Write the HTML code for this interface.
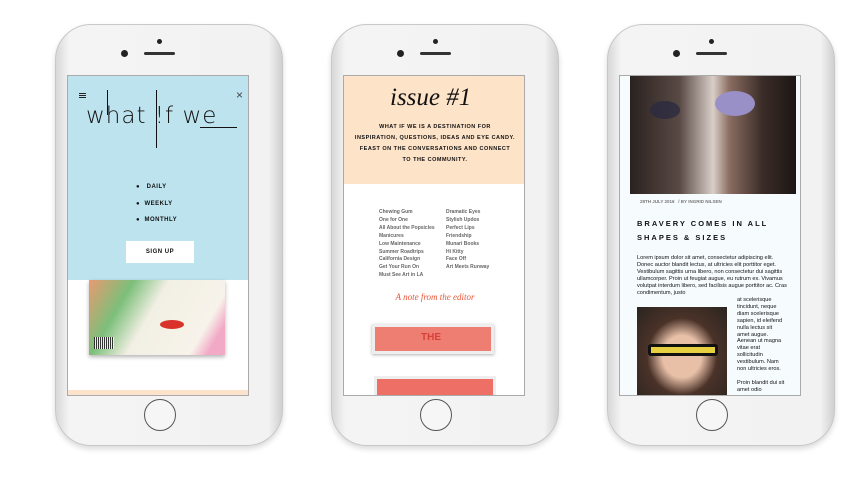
<!DOCTYPE html>
<html><head><style>
*{margin:0;padding:0;box-sizing:border-box}
body{width:863px;height:488px;background:#fff;position:relative;overflow:hidden;font-family:"Liberation Sans",sans-serif}
.ph{position:absolute;top:24px;width:228px;height:422px;border-radius:36px;background:linear-gradient(90deg,#d8d8d8,#f4f4f4 6%,#f2f2f2 94%,#d0d0d0);border:1px solid #c8c8c8;box-shadow:0 3px 6px rgba(0,0,0,.15)}
.ph .dot{position:absolute;top:14px;left:101px;width:5px;height:5px;border-radius:50%;background:#222}
.ph .cam{position:absolute;top:25px;left:65px;width:7px;height:7px;border-radius:50%;background:#222}
.ph .spk{position:absolute;top:27px;left:88px;width:31px;height:3px;border-radius:2px;background:#333}
.ph .home{position:absolute;top:374px;left:88px;width:32px;height:32px;border-radius:50%;border:1.5px solid #555;background:#f6f6f6}
.sc{position:absolute;top:50px;left:11px;width:182px;height:321px;overflow:hidden;background:#fff;border:1px solid #aaa}
.b{font-weight:bold;font-size:6px;letter-spacing:.5px;color:#111}
</style></head><body>

<div class="ph" style="left:55px">
<div class="dot"></div><div class="cam"></div><div class="spk"></div><div class="home"></div>
<div class="sc">
<div style="position:absolute;left:0;top:0;width:182px;height:204px;background:#bde3ee"></div>
<div style="position:absolute;left:11px;top:17px;width:7px;height:1px;background:#222;box-shadow:0 2px 0 #222,0 4px 0 #222"></div>
<div style="position:absolute;left:168px;top:12px;font-size:12px;color:#444">×</div>
<div style="position:absolute;left:18px;top:27px;font-size:23px;color:#111;font-family:'DejaVu Sans',sans-serif;font-weight:200;letter-spacing:1px">what !f we</div>
<div style="position:absolute;left:132px;top:51px;width:37px;height:1px;background:#111"></div>
<div style="position:absolute;left:39px;top:14px;width:1px;height:25px;background:#111"></div>
<div style="position:absolute;left:88px;top:14px;width:1px;height:58px;background:#111"></div>
<div class="b" style="position:absolute;left:68px;top:108px">● &nbsp;&nbsp;DAILY</div>
<div class="b" style="position:absolute;left:68px;top:125px">● &nbsp;WEEKLY</div>
<div class="b" style="position:absolute;left:68px;top:141px">● &nbsp;MONTHLY</div>
<div class="b" style="position:absolute;left:58px;top:165px;width:68px;height:22px;background:#fff;text-align:center;line-height:22px">SIGN UP</div>
<div style="position:absolute;left:21px;top:204px;width:136px;height:75px;background:linear-gradient(120deg,#e89a70,#7cbf7a 25%,#f2efe4 45%,#f7f3ea 80%,#f2a9c6 90%);box-shadow:0 2px 4px rgba(0,0,0,.3)"></div>
<div style="position:absolute;left:92px;top:244px;width:24px;height:9px;border-radius:50%;background:#d8322a"></div>
<div style="position:absolute;left:26px;top:261px;width:20px;height:12px;background:repeating-linear-gradient(90deg,#333 0 1px,#eee 1px 2px)"></div>
<div style="position:absolute;left:0;top:314px;width:182px;height:7px;background:#fde3cc"></div>
</div></div>

<div class="ph" style="left:331px">
<div class="dot"></div><div class="cam"></div><div class="spk"></div><div class="home"></div>
<div class="sc">
<div style="position:absolute;left:0;top:0;width:182px;height:108px;background:#fde3c8"></div>
<div style="position:absolute;left:46px;top:8px;font-size:25px;font-family:'Liberation Serif',serif;font-style:italic;color:#111">issue #1</div>
<div class="b" style="position:absolute;left:0;top:46px;width:182px;text-align:center;line-height:11px;font-size:5.5px">WHAT IF WE IS A DESTINATION FOR<br>INSPIRATION, QUESTIONS, IDEAS AND EYE CANDY.<br>FEAST ON THE CONVERSATIONS AND CONNECT<br>TO THE COMMUNITY.</div>
<div style="position:absolute;left:35px;top:133px;font-size:5px;font-weight:bold;color:#666;line-height:7.9px">Chewing Gum<br>One for One<br>All About the Popsicles<br>Manicures<br>Low Maintenance<br>Summer Roadtrips<br>California Design<br>Get Your Run On<br>Must See Art in LA</div>
<div style="position:absolute;left:102px;top:133px;font-size:5px;font-weight:bold;color:#666;line-height:7.9px">Dramatic Eyes<br>Stylish Updos<br>Perfect Lips<br>Friendship<br>Munari Books<br>Hi Kitty<br>Face Off<br>Art Meets Runway</div>
<div style="position:absolute;left:0;top:216px;width:182px;text-align:center;font-size:9px;font-style:italic;color:#e8573a;font-family:'Liberation Serif',serif">A note from the editor</div>
<div style="position:absolute;left:28px;top:248px;width:122px;height:30px;background:#ee7d72;border:3px solid #eee;box-shadow:0 1px 3px rgba(0,0,0,.3)"></div>
<div style="position:absolute;left:77px;top:256px;font-size:10px;font-weight:bold;color:#d8403a">THE</div>
<div style="position:absolute;left:30px;top:300px;width:122px;height:25px;background:#ee6f66;border:3px solid #eee"></div>
</div></div>

<div class="ph" style="left:607px">
<div class="dot"></div><div class="cam"></div><div class="spk"></div><div class="home"></div>
<div class="sc" style="background:#f6fbfe">
<div style="position:absolute;left:10px;top:0;width:166px;height:118px;background:linear-gradient(90deg,#2a2220,#5a4a45 30%,#d9cfc8 50%,#8a6c60 60%,#3a2c28 80%,#1c1614)"></div>
<div style="position:absolute;left:30px;top:25px;width:30px;height:18px;border-radius:50%;background:#2a2a40;opacity:.8"></div>
<div style="position:absolute;left:95px;top:15px;width:40px;height:25px;border-radius:50%;background:#9a90c8"></div>
<div style="position:absolute;left:20px;top:123px;font-size:4.5px;font-weight:bold;color:#777">28TH JULY 2016 &nbsp; / BY INGRID NILSEN</div>
<div style="position:absolute;left:17px;top:141px;font-size:7.5px;font-weight:bold;letter-spacing:2px;line-height:14px;color:#111">BRAVERY COMES IN ALL<br>SHAPES &amp; SIZES</div>
<div style="position:absolute;left:17px;top:179px;width:150px;font-size:5.6px;line-height:6.9px;color:#111">Lorem ipsum dolor sit amet, consectetur adipiscing elit. Donec auctor blandit lectus, at ultricies elit porttitor eget. Vestibulum sagittis urna libero, non consectetur dui sagittis ullamcorper. Proin ut feugiat augue, eu rutrum ex. Vivamus volutpat interdum libero, sed facilisis augue porttitor ac. Cras condimentum, justo</div>
<div style="position:absolute;left:117px;top:221px;width:48px;font-size:5.6px;line-height:6.9px;color:#111">at scelerisque tincidunt, neque diam scelerisque sapien, id eleifend nulla lectus sit amet augue. Aenean ut magna vitae erat sollicitudin vestibulum. Nam non ultricies eros.<br><br>Proin blandit dui sit amet odio</div>
<div style="position:absolute;left:17px;top:231px;width:90px;height:90px;background:radial-gradient(ellipse at 50% 55%,#e8c0a8 0 30%,#4a3228 55%,#2a2420)"></div>
<div style="position:absolute;left:28px;top:268px;width:70px;height:12px;border:3px solid #111;background:#e6d040;border-radius:3px"></div>
</div></div>
</body></html>
